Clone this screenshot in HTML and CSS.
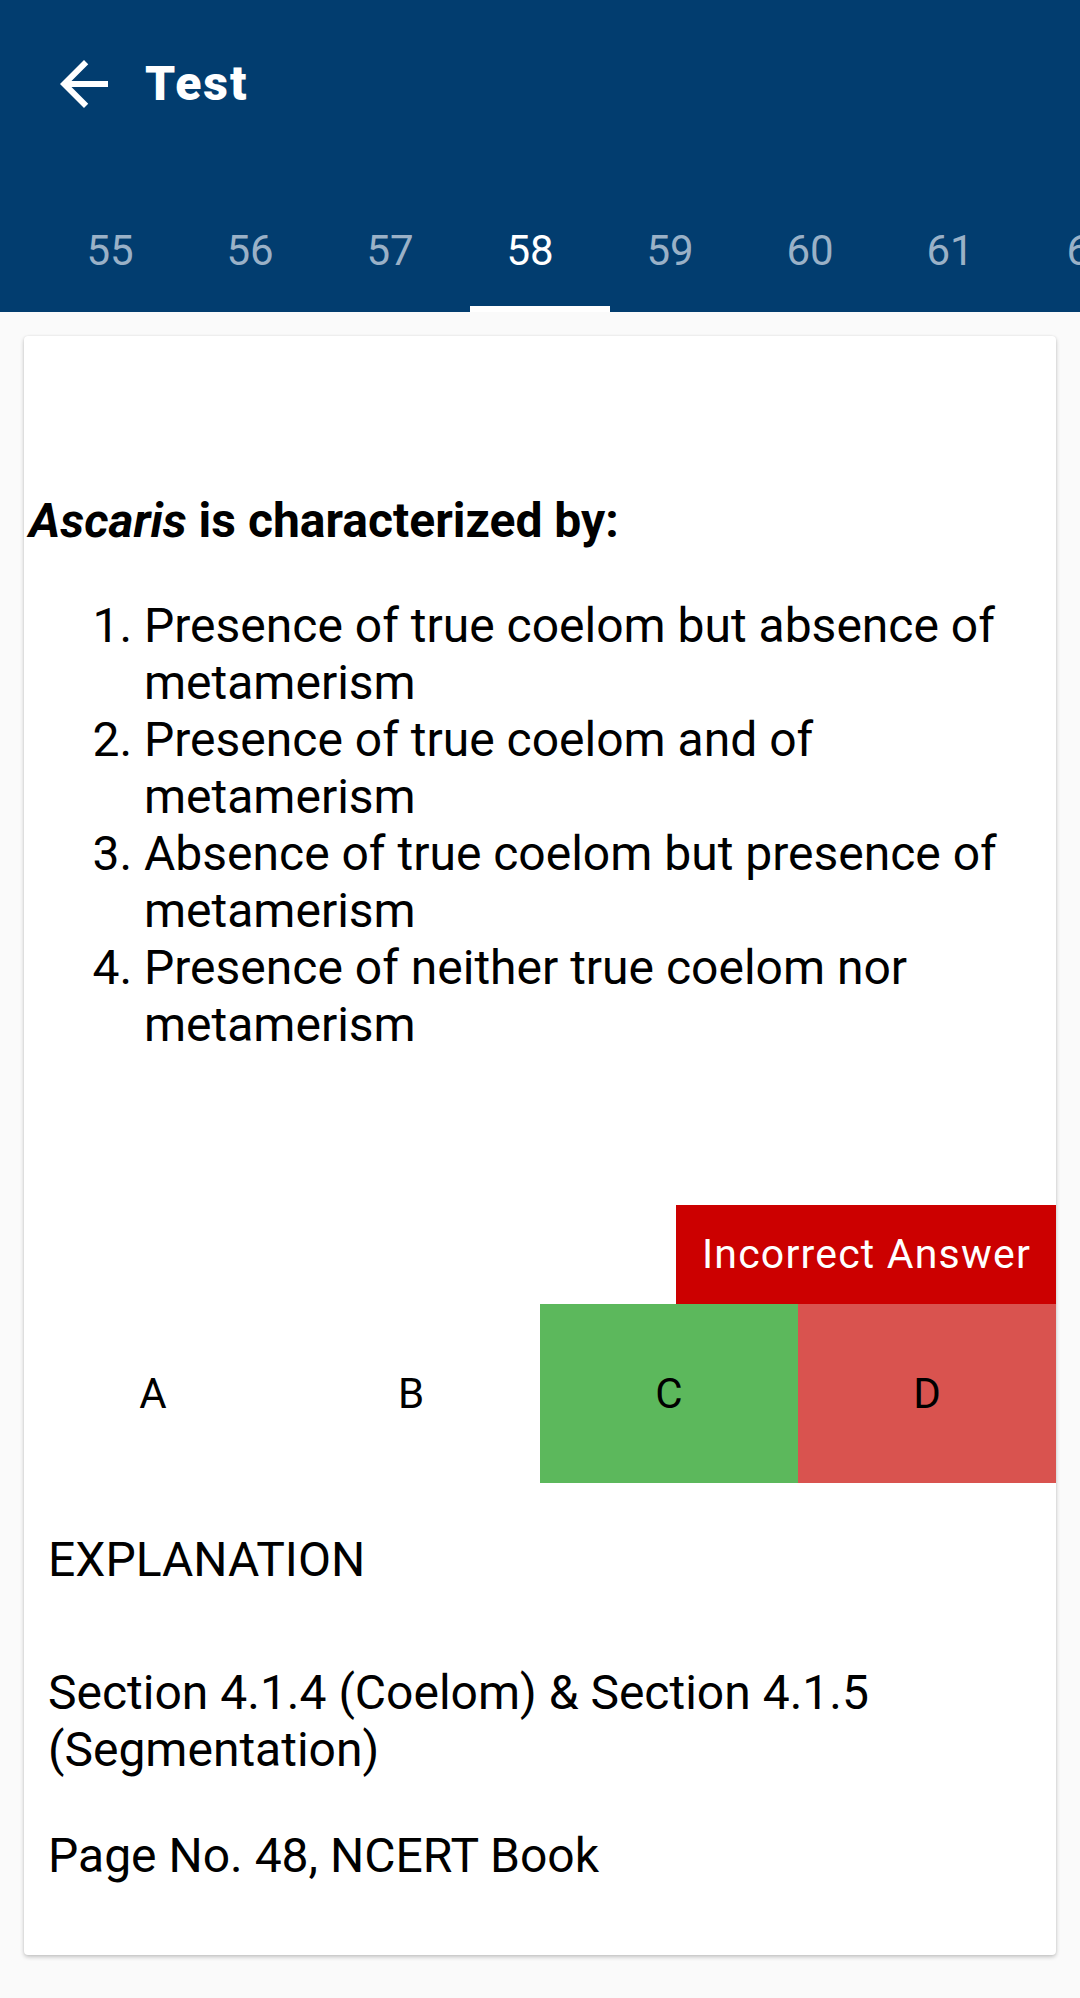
FILE: index.html
```html
<!DOCTYPE html>
<html lang="en">
  <head>
    <meta charset="UTF-8" />
    <meta name="viewport" content="width=device-width, initial-scale=1.0" />
    <title>Test</title>
    <link rel="stylesheet" href="styles.css">
  </head>
  <body>
    <div class="appbar">
      <div class="toolbar">
        <svg class="back" viewBox="0 0 24 24" width="72" height="72">
          <path d="M20 11H7.83l5.59-5.59L12 4l-8 8 8 8 1.41-1.41L7.83 13H20v-2z" fill="#ffffff" />
        </svg>
        <h1 class="title">Test</h1>
      </div>
      <div class="tabs">
        <div class="tab">55</div>
        <div class="tab">56</div>
        <div class="tab">57</div>
        <div class="tab active">58</div>
        <div class="tab">59</div>
        <div class="tab">60</div>
        <div class="tab">61</div>
        <div class="tab">62</div>
      </div>
    </div>

    <div class="content">
      <div class="card">
        <p class="question"><i>Ascaris</i> is characterized by:</p>
        <ol class="choices">
          <li>Presence of true coelom but absence of metamerism</li>
          <li>Presence of true coelom and of metamerism</li>
          <li>Absence of true coelom but presence of metamerism</li>
          <li>Presence of neither true coelom nor metamerism</li>
        </ol>

        <div class="result">
          <span class="result-label">Incorrect Answer</span>
        </div>
        <div class="options">
          <div class="option">A</div>
          <div class="option">B</div>
          <div class="option correct">C</div>
          <div class="option wrong">D</div>
        </div>

        <div class="explanation">
          <p class="exp-title">EXPLANATION</p>
          <p class="exp-text">Section 4.1.4 (Coelom) &amp; Section 4.1.5 (Segmentation)</p>
          <p class="exp-page">Page No. 48, NCERT Book</p>
        </div>
      </div>
    </div>
  </body>
</html>
```

FILE: styles.css
```css
* {
  margin: 0;
  padding: 0;
  box-sizing: border-box;
}

body {
  width: 1080px;
  min-height: 1998px;
  background: #fafafa;
  font-family: Roboto, "Noto Sans", sans-serif;
  color: #000000;
  overflow: hidden;
}

.appbar {
  background: #023d6f;
  color: #ffffff;
}

.toolbar {
  height: 168px;
  display: flex;
  align-items: center;
  padding-left: 48px;
}

.back {
  display: block;
  flex-shrink: 0;
}

.title {
  margin-left: 25px;
  font-size: 48px;
  font-weight: 900;
  line-height: 56px;
  letter-spacing: 2px;
}

.tabs {
  height: 144px;
  display: flex;
  padding-left: 50px;
  overflow: hidden;
}

.tab {
  position: relative;
  flex: 0 0 140px;
  padding: 58px 20px 0 0;
  text-align: center;
  font-size: 42px;
  color: #9ab1c7;
}

.tab.active {
  color: #ffffff;
}

.tab.active::after {
  content: "";
  position: absolute;
  left: 0;
  right: 0;
  bottom: 0;
  height: 6px;
  background: #ffffff;
}

.content {
  padding: 24px;
}

.card {
  background: #ffffff;
  border-radius: 4px;
  box-shadow: 0 2px 4px rgba(0, 0, 0, 0.22), 0 0 2px rgba(0, 0, 0, 0.08);
  padding-bottom: 71px;
}

.question {
  padding-top: 156px;
  padding-left: 5px;
  font-size: 48px;
  font-weight: 700;
}

.choices {
  margin-top: 48px;
  padding-left: 120px;
  padding-right: 10px;
  font-size: 48px;
}

.result {
  display: flex;
  justify-content: flex-end;
  margin-top: 152px;
}

.result-label {
  background: #cc0000;
  color: #ffffff;
  font-size: 41px;
  line-height: 49px;
  letter-spacing: 1.2px;
  padding: 25px 20px 25px 26px;
  width: 380px;
}

.options {
  display: grid;
  grid-template-columns: repeat(4, 1fr);
  height: 179px;
}

.option {
  display: flex;
  align-items: center;
  justify-content: center;
  font-size: 42px;
}

.option.correct {
  background: #5cb85c;
}

.option.wrong {
  background: #d9534f;
}

.explanation {
  padding: 48px 24px 0 24px;
  font-size: 48px;
}

.exp-text {
  margin-top: 76px;
}

.exp-page {
  margin-top: 49px;
}
```
